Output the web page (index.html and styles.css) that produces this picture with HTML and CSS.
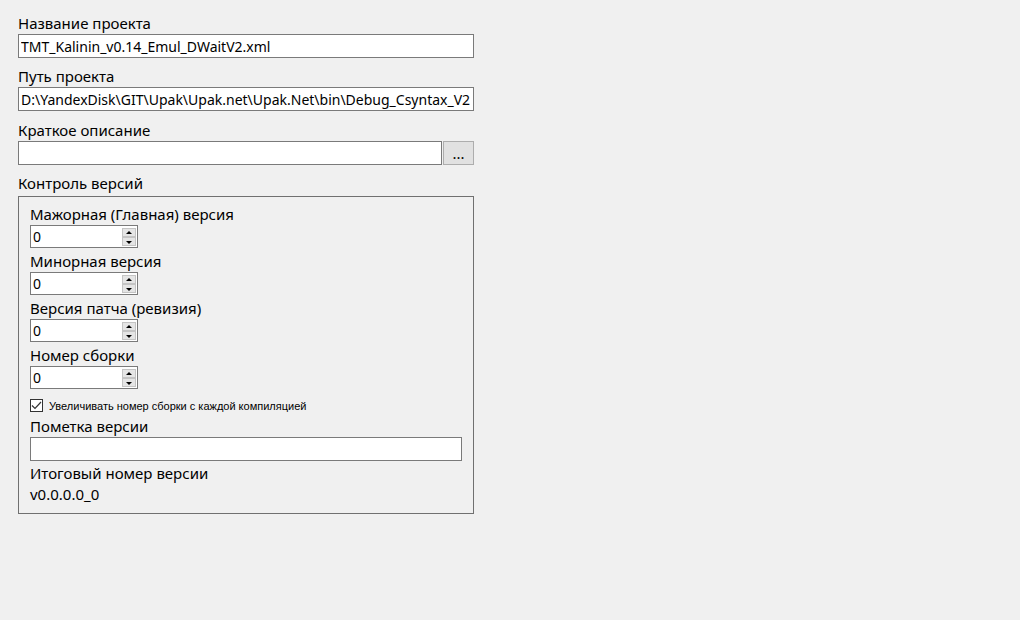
FILE: index.html
```html
<!DOCTYPE html>
<html lang="ru">
<head>
    <meta charset="UTF-8">
    <title>Свойства проекта</title>
    <link rel="stylesheet" href="styles.css">
</head>
<body>
    <div class="form">
        <div class="field">
            <div class="caption">Название проекта</div>
            <input class="textbox" type="text" value="TMT_Kalinin_v0.14_Emul_DWaitV2.xml" readonly>
        </div>

        <div class="field path">
            <div class="caption">Путь проекта</div>
            <input class="textbox" type="text" value="D:\YandexDisk\GIT\Upak\Upak.net\Upak.Net\bin\Debug_Csyntax_V2" readonly>
        </div>

        <div class="field">
            <div class="caption">Краткое описание</div>
            <div class="row">
                <input class="textbox grow" type="text" value="">
                <button class="browse" type="button">...</button>
            </div>
        </div>

        <div class="field">
            <div class="caption">Контроль версий</div>
            <div class="group">
                <div class="caption">Мажорная (Главная) версия</div>
                <div class="spin">
                    <span class="spin-value">0</span>
                    <div class="spin-buttons">
                        <span class="spin-btn up"></span>
                        <span class="spin-btn down"></span>
                    </div>
                </div>

                <div class="caption">Минорная версия</div>
                <div class="spin">
                    <span class="spin-value">0</span>
                    <div class="spin-buttons">
                        <span class="spin-btn up"></span>
                        <span class="spin-btn down"></span>
                    </div>
                </div>

                <div class="caption">Версия патча (ревизия)</div>
                <div class="spin">
                    <span class="spin-value">0</span>
                    <div class="spin-buttons">
                        <span class="spin-btn up"></span>
                        <span class="spin-btn down"></span>
                    </div>
                </div>

                <div class="caption">Номер сборки</div>
                <div class="spin">
                    <span class="spin-value">0</span>
                    <div class="spin-buttons">
                        <span class="spin-btn up"></span>
                        <span class="spin-btn down"></span>
                    </div>
                </div>

                <label class="check">
                    <span class="check-box">
                        <svg width="11" height="11" viewBox="0 0 11 11">
                            <path d="M1 5.5 L4 8.5 L10 2" fill="none" stroke="#333" stroke-width="1.2"/>
                        </svg>
                    </span>
                    Увеличивать номер сборки с каждой компиляцией
                </label>

                <div class="caption">Пометка версии</div>
                <input class="textbox" type="text" value="">

                <div class="caption">Итоговый номер версии</div>
                <div class="caption">v0.0.0.0_0</div>
            </div>
        </div>
    </div>
</body>
</html>
```

FILE: styles.css
```css
body {
    font-family: "Noto Sans", "Open Sans", sans-serif;
    font-size: 15px;
    color: #000;
    background-color: #f0f0f0;
    margin: 0;
    padding: 13px 0 0 18px;
}

.form {
    width: 456px;
    display: flex;
    flex-direction: column;
}

.field {
    display: flex;
    flex-direction: column;
    margin-bottom: 8px;
}

.field.path {
    margin-bottom: 9px;
}

.caption {
    height: 21px;
    line-height: 21px;
    white-space: nowrap;
}

.textbox {
    box-sizing: border-box;
    height: 24px;
    margin: 0;
    padding: 0 2px;
    border: 1px solid #7a7a7a;
    background-color: #fff;
    font-family: inherit;
    font-size: 14px;
    color: #000;
    outline: none;
}

.row {
    display: flex;
    gap: 1px;
}

.grow {
    flex: 1;
}

.browse {
    box-sizing: border-box;
    width: 31px;
    height: 24px;
    margin: 0;
    padding: 0;
    border: 1px solid #adadad;
    background-color: #e1e1e1;
    font-family: inherit;
    font-size: 15px;
    line-height: 22px;
    color: #000;
}

.group {
    border: 1px solid #707070;
    padding: 7px 11px 8px;
    margin-top: 2px;
    display: flex;
    flex-direction: column;
}

.group .textbox {
    margin-bottom: 2px;
}

.spin {
    box-sizing: border-box;
    width: 108px;
    height: 23px;
    margin-bottom: 3px;
    border: 1px solid #7a7a7a;
    background-color: #fff;
    display: flex;
    align-items: stretch;
    padding: 1px;
}

.spin-value {
    flex: 1;
    padding-left: 1px;
    font-size: 14px;
    line-height: 19px;
}

.spin-buttons {
    width: 14px;
    display: flex;
    flex-direction: column;
    margin-top: 1px;
}

.spin-btn {
    box-sizing: border-box;
    height: 9px;
    border: 1px solid #c4c4c4;
    background-color: #e5e5e5;
    position: relative;
}

.spin-btn::after {
    content: "";
    position: absolute;
    left: 3px;
    top: 2px;
    border-left: 3px solid transparent;
    border-right: 3px solid transparent;
}

.spin-btn.up::after {
    border-bottom: 3px solid #000;
}

.spin-btn.down::after {
    top: 3px;
    border-top: 3px solid #000;
}

.check {
    display: flex;
    align-items: center;
    gap: 6px;
    height: 17px;
    margin: 5px 0 2px;
    font-family: "Liberation Sans", sans-serif;
    font-size: 11px;
}

.check-box {
    box-sizing: border-box;
    width: 13px;
    height: 13px;
    border: 1px solid #333;
    background-color: #fff;
    display: flex;
    align-items: center;
    justify-content: center;
}
```
